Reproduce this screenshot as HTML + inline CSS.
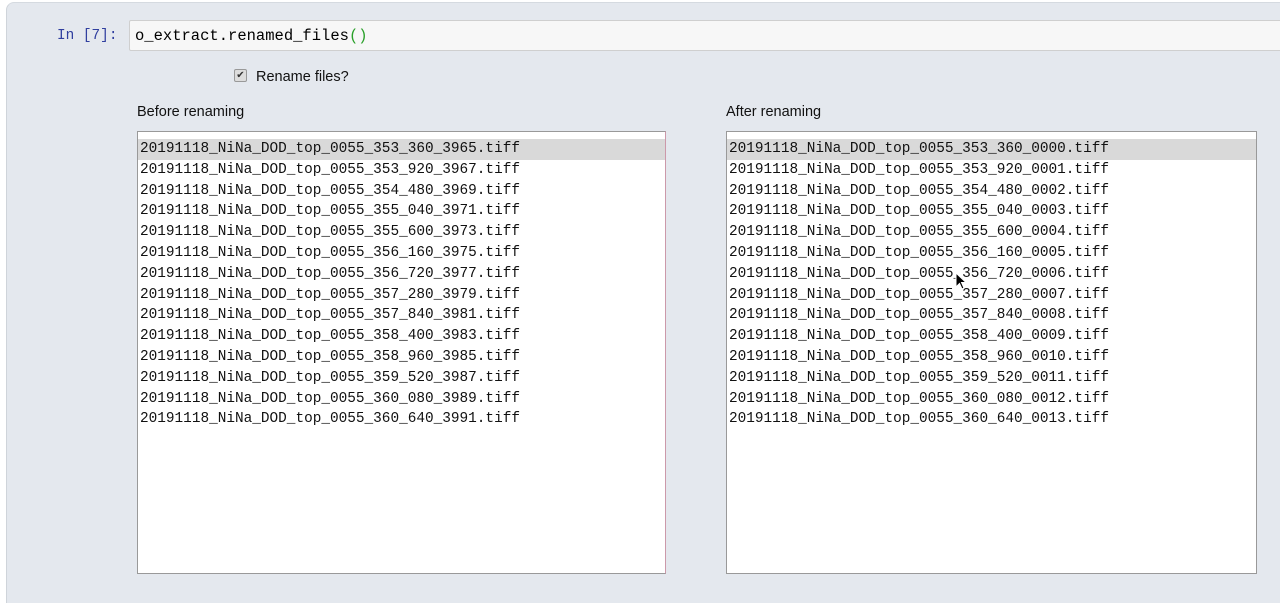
<!DOCTYPE html><html><head><style>
body{margin:0;width:1280px;height:586px;background:#fff;overflow:hidden;font-family:"Liberation Sans",sans-serif}
.cell{position:absolute;left:6px;top:2px;width:1290px;height:600px;background:#e4e8ee;border-left:1px solid #cfd4da;border-top:1px solid #d5dae0;border-radius:8px 0 0 0}
.prompt{position:absolute;left:57px;top:28px;font:14.4px "Liberation Mono",monospace;color:#303f9f}
.input{position:absolute;left:129px;top:20px;width:1160px;height:31px;background:#f7f7f7;border:1px solid #cfcfcf;border-radius:2px;font:15.5px "Liberation Mono",monospace;line-height:31px;padding-left:5px;box-sizing:border-box;color:#000}
.chk{position:absolute;left:234px;top:69px;width:11px;height:11px;border:1px solid #999;border-radius:2px;background:#ddd;font-size:10px;line-height:11px;text-align:center;color:#333}
.lbl{position:absolute;font-size:14.5px;color:#111}
.box{position:absolute;top:131px;width:529px;height:443px;background:#fff;border:1px solid #999;box-sizing:border-box;padding-top:7px;font:14.4px "Liberation Mono",monospace;color:#111}
.box div{height:20.8px;line-height:20.8px;padding-left:2px;white-space:pre}
.box div.s{background:#d9d9d9}
</style></head><body>
<div class="cell"></div>
<div class="prompt">In [7]:</div>
<div class="input">o_extract.renamed_files<span style="color:#2aa02a">()</span></div>
<div class="chk">✔</div>
<div class="lbl" style="left:256px;top:69px">Rename files?</div>
<div class="lbl" style="left:137px;top:104px">Before renaming</div>
<div class="lbl" style="left:726px;top:104px">After renaming</div>
<div class="box" style="left:137px;border-right-color:#c9a">
<div class="s">20191118_NiNa_DOD_top_0055_353_360_3965.tiff</div><div>20191118_NiNa_DOD_top_0055_353_920_3967.tiff</div><div>20191118_NiNa_DOD_top_0055_354_480_3969.tiff</div><div>20191118_NiNa_DOD_top_0055_355_040_3971.tiff</div><div>20191118_NiNa_DOD_top_0055_355_600_3973.tiff</div><div>20191118_NiNa_DOD_top_0055_356_160_3975.tiff</div><div>20191118_NiNa_DOD_top_0055_356_720_3977.tiff</div><div>20191118_NiNa_DOD_top_0055_357_280_3979.tiff</div><div>20191118_NiNa_DOD_top_0055_357_840_3981.tiff</div><div>20191118_NiNa_DOD_top_0055_358_400_3983.tiff</div><div>20191118_NiNa_DOD_top_0055_358_960_3985.tiff</div><div>20191118_NiNa_DOD_top_0055_359_520_3987.tiff</div><div>20191118_NiNa_DOD_top_0055_360_080_3989.tiff</div><div>20191118_NiNa_DOD_top_0055_360_640_3991.tiff</div>
</div>
<div class="box" style="left:726px;width:531px">
<div class="s">20191118_NiNa_DOD_top_0055_353_360_0000.tiff</div><div>20191118_NiNa_DOD_top_0055_353_920_0001.tiff</div><div>20191118_NiNa_DOD_top_0055_354_480_0002.tiff</div><div>20191118_NiNa_DOD_top_0055_355_040_0003.tiff</div><div>20191118_NiNa_DOD_top_0055_355_600_0004.tiff</div><div>20191118_NiNa_DOD_top_0055_356_160_0005.tiff</div><div>20191118_NiNa_DOD_top_0055_356_720_0006.tiff</div><div>20191118_NiNa_DOD_top_0055_357_280_0007.tiff</div><div>20191118_NiNa_DOD_top_0055_357_840_0008.tiff</div><div>20191118_NiNa_DOD_top_0055_358_400_0009.tiff</div><div>20191118_NiNa_DOD_top_0055_358_960_0010.tiff</div><div>20191118_NiNa_DOD_top_0055_359_520_0011.tiff</div><div>20191118_NiNa_DOD_top_0055_360_080_0012.tiff</div><div>20191118_NiNa_DOD_top_0055_360_640_0013.tiff</div>
</div>
<svg style="position:absolute;left:955px;top:272px" width="12" height="18" viewBox="0 0 12 18"><path d="M1 1 L1 15 L4.5 11.5 L7 17 L9 16 L6.5 10.5 L11 10.5 Z" fill="#000" stroke="#fff" stroke-width="1"/></svg>
</body></html>
